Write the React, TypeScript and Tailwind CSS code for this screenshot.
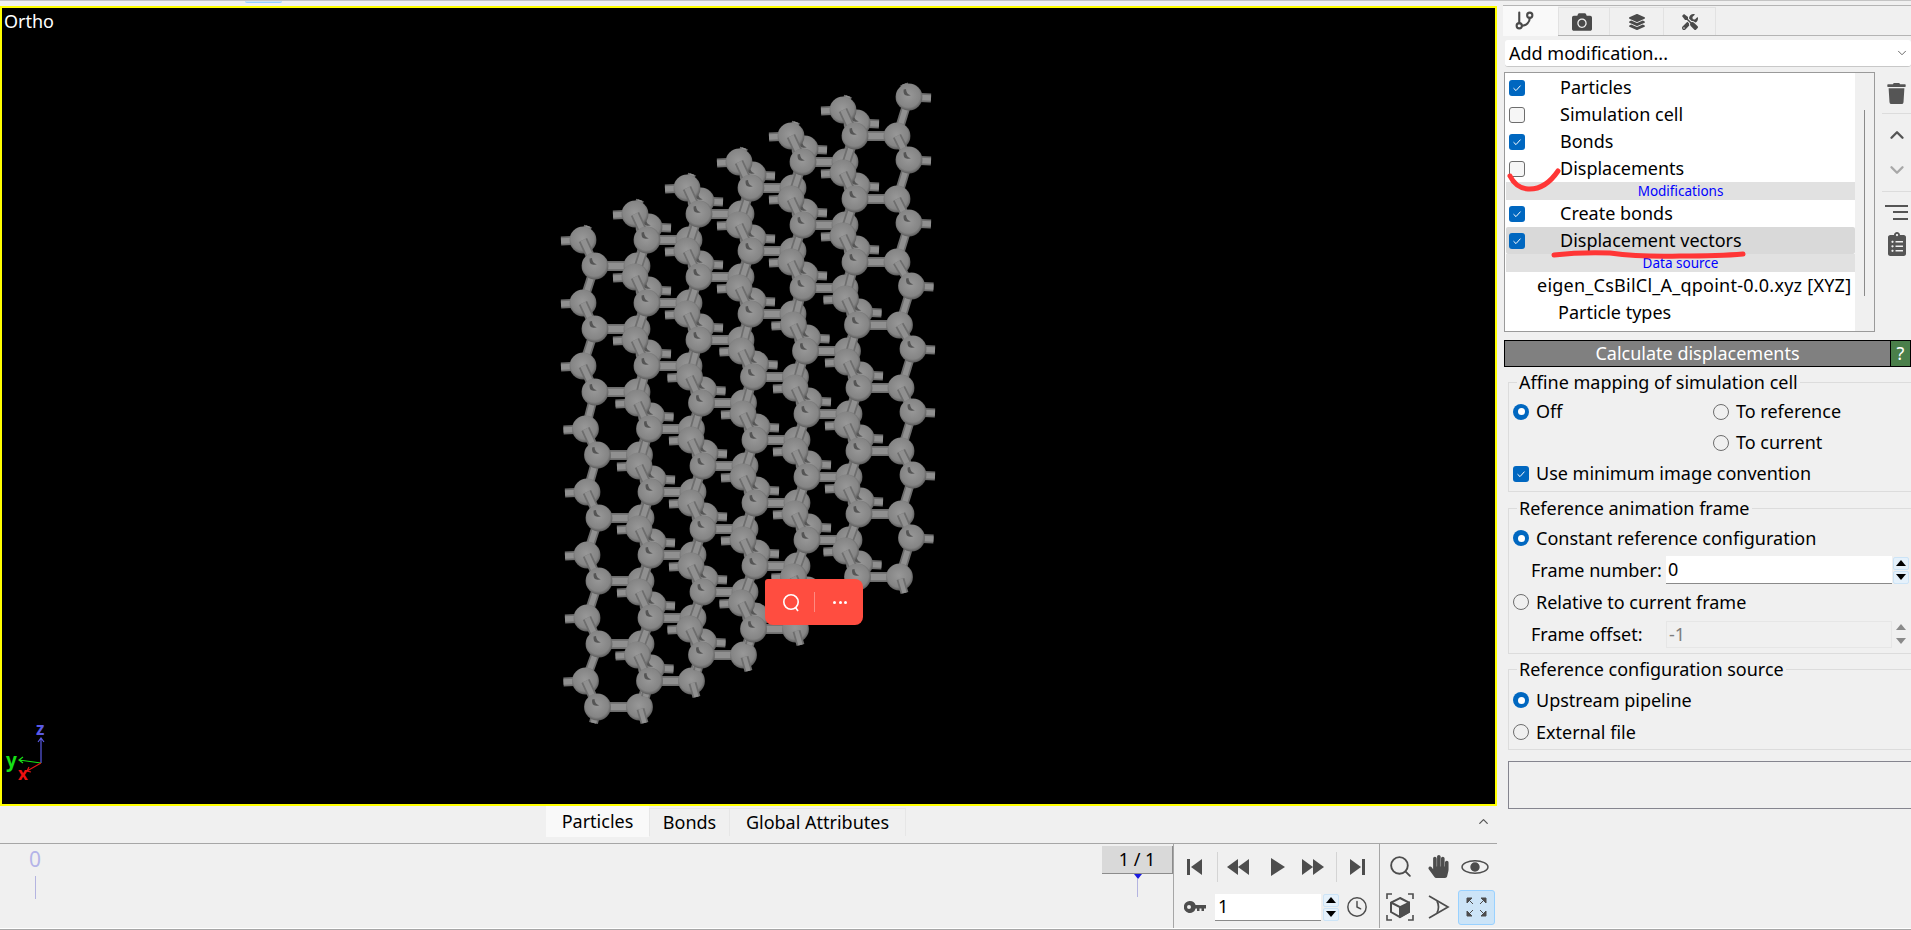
import React from 'react';
import { Search, Clock, GitBranch, ChevronDown, ChevronUp } from 'lucide-react';
import { FaCamera, FaHandPaper, FaLayerGroup, FaTools, FaTrash, FaClipboardList } from 'react-icons/fa';

const ripple = [0, 0, 0, 2.5, 4, 4, 4, 2.5];
const cols = [5, 4, 3, 2, 1, 0];
const rows = [0, 1, 2, 3, 4, 5, 6, 7];

const G = (k: number, r: number) => [843 - 52 * k + ripple[r], 110 + 26 * k + 63 * r];
const E = (k: number, r: number) => [855 - 52 * k + ripple[r], 136 + 26 * k + 63 * r];
const B = (m: number, r: number) => [897 - 52 * m + ripple[r], 136 + 26 * m + 63 * r];
const A = (m: number, r: number) => [909 - 52 * m + ripple[r], 97 + 26 * m + 63 * r];

const Bond = ({ a, b, w = 10 }: { a: number[]; b: number[]; w?: number }) => (
  <g>
    <line x1={a[0]} y1={a[1]} x2={b[0]} y2={b[1]} stroke="#6e6e6e" strokeWidth={w} />
    <line x1={a[0]} y1={a[1]} x2={b[0]} y2={b[1]} stroke="#909090" strokeWidth={w - 3.5} />
  </g>
);

const Atom = ({ p, hole }: { p: number[]; hole?: boolean }) => (
  <g transform={`translate(${p[0]} ${p[1]})`}>
    <circle r={13.4} fill="url(#atom)" />
    {hole && <path d="M -5.4 -7.5 Q -6.4 0.6 1.8 -1.8 Q -2.8 -2.6 -3 -8 Z" fill="#555555" />}
  </g>
);

const Molecule = () => (
  <svg viewBox="2 8 1493 796" className="absolute left-0 top-0 w-[1493px] h-[796px]">
    <defs>
      <radialGradient id="atom" cx="48%" cy="45%" r="55%">
        <stop offset="0%" stopColor="#989898" />
        <stop offset="78%" stopColor="#858585" />
        <stop offset="100%" stopColor="#5c5c5c" />
      </radialGradient>
    </defs>
    {cols.map((k) =>
      rows.map((r) => <Bond key={`h${k}${r}`} a={E(k, r)} b={B(k, r)} />)
    )}
    {cols.map((m) => (
      <g key={`y${m}`}>
        {rows.map((r) => {
          const a = A(m, r);
          return (
            <g key={r}>
              <Bond a={a} b={[a[0] + 22, a[1] + 1]} w={9} />
              <Bond a={a} b={B(m, r)} w={9} />
            </g>
          );
        })}
        <Bond a={A(m, 0)} b={[A(m, 0)[0] - 5, A(m, 0)[1] - 13]} w={8} />
        {rows.map((r) => <Atom key={r} p={B(m, r)} />)}
        {rows.slice(0, 7).map((r) => <Bond key={r} a={B(m, r)} b={A(m, r + 1)} w={9} />)}
        <Bond a={[B(m, 7)[0] + 1, B(m, 7)[1] + 2]} b={[B(m, 7)[0] + 5, B(m, 7)[1] + 16]} w={8} />
        {rows.map((r) => <Atom key={r} p={A(m, r)} hole />)}
      </g>
    ))}
    {cols.map((k) => (
      <g key={`x${k}`}>
        {rows.map((r) => {
          const g = G(k, r);
          const e = E(k, r);
          return (
            <g key={r}>
              <Bond a={g} b={[g[0] - 22, g[1] + 1]} w={9} />
              <Bond a={e} b={r < 7 ? G(k, r + 1) : [e[0] - 4, e[1] + 16]} w={9} />
            </g>
          );
        })}
        <Bond a={G(k, 0)} b={[G(k, 0)[0] + 5, G(k, 0)[1] - 14]} w={8} />
        {rows.map((r) => <Atom key={r} p={G(k, r)} />)}
        {rows.map((r) => <Bond key={r} a={G(k, r)} b={E(k, r)} w={9} />)}
        {rows.map((r) => <Atom key={r} p={E(k, r)} hole />)}
      </g>
    ))}
    {/* axis tripod */}
    <g strokeWidth="1.2" fill="none">
      <path d="M41 763 L41 738 M38 742 L41 738 L44 742" stroke="#5a5ae6" />
      <path d="M41 763 L19 760 M23 757 L19 760 L23 763" stroke="#16e016" />
      <path d="M41 763 L27 771 M29 767 L27 771 L31 772" stroke="#e01616" />
    </g>
  </svg>
);

const Check = ({ on }: { on?: boolean }) =>
  on ? (
    <span className="flex h-[16px] w-[16px] shrink-0 items-center justify-center rounded-[3px] bg-[#0067c0]">
      <svg width="10" height="10" viewBox="0 0 10 10" fill="none" stroke="#fff" strokeWidth="1">
        <path d="M1.5 5.2 L4 7.6 L8.5 2.6" />
      </svg>
    </span>
  ) : (
    <span className="h-[16px] w-[16px] shrink-0 rounded-[3px] border border-[#6d6d6d] bg-[#f6f6f6]" />
  );

const Radio = ({ on, label }: { on?: boolean; label: string }) => (
  <div className="flex items-center gap-[7px]">
    {on ? (
      <span className="flex h-[16px] w-[16px] shrink-0 items-center justify-center rounded-full bg-[#0067c0]">
        <span className="h-[7px] w-[7px] rounded-full bg-white" />
      </span>
    ) : (
      <span className="h-[16px] w-[16px] shrink-0 rounded-full border border-[#6d6d6d]" />
    )}
    <span>{label}</span>
  </div>
);

const ListRow = ({ on, label }: { on?: boolean; label: string }) => (
  <div className="flex h-[27px] items-center pl-[3px]">
    <Check on={on} />
    <span className="ml-[35px]">{label}</span>
  </div>
);

const SectionBar = ({ label }: { label: string }) => (
  <div className="flex h-[18px] items-center justify-center bg-[#e1e1e1] text-[13.5px] text-[#0000ff]">{label}</div>
);

const Arrow = ({ up, color = '#000' }: { up?: boolean; color?: string }) => (
  <svg width="10" height="6" viewBox="0 0 10 6" fill={color}>
    <path d={up ? 'M0 6 L5 0 L10 6 Z' : 'M0 0 L10 0 L5 6 Z'} />
  </svg>
);

const Spin = ({ active }: { active?: boolean }) => (
  <div className="flex w-[16px] shrink-0 flex-col gap-[1px]">
    {[true, false].map((up) => (
      <span
        key={String(up)}
        className={
          active
            ? 'flex h-[13px] items-center justify-center rounded-[2px] border border-[#cce4f7] bg-[#e5f1fb]'
            : 'flex h-[13px] items-center justify-center'
        }
      >
        <Arrow up={up} color={active ? '#000' : '#8a8a8a'} />
      </span>
    ))}
  </div>
);

const Group = ({ title, children, className }: { title: string; children: React.ReactNode; className: string }) => (
  <fieldset className={`ml-[5px] w-[420px] border border-[#dcdcdc] ${className}`}>
    <legend className="ml-[8px] h-[22px] px-[2px] leading-[22px]">{title}</legend>
    {children}
  </fieldset>
);

const Transport = ({ d, w }: { d: string; w: number }) => (
  <svg width={w} height="18" viewBox={`0 0 ${w} 18`} fill="#4d4d4d">
    <path d={d} />
  </svg>
);

const ViewTabs = () => (
  <div className="flex h-[30px] items-end border-b border-[#b4b4b4]">
    <div className="-mb-[1px] flex h-[31px] w-[55px] items-center justify-center bg-[#f9f9f9] pr-[12px]">
      <GitBranch size={21} strokeWidth={2.4} color="#4a4a4a" />
    </div>
    <div className="flex h-[28px] w-[52px] items-center justify-center border border-b-0 border-[#e2e2e2] pr-[4px]">
      <FaCamera size={20} color="#4a4a4a" />
    </div>
    <div className="flex h-[28px] w-[54px] items-center justify-center border border-b-0 border-l-0 border-[#e2e2e2]">
      <FaLayerGroup size={16} color="#4a4a4a" />
    </div>
    <div className="flex h-[28px] w-[52px] items-center justify-center border border-b-0 border-l-0 border-[#e2e2e2]">
      <FaTools size={16} color="#4a4a4a" />
    </div>
  </div>
);

const PipelineList = () => (
  <div className="relative mt-[5px] flex h-[260px]">
    <div className="ml-[1px] flex h-[260px] w-[372px] border border-[#9a9a9a] bg-white pl-[1px]">
      <div className="w-[349px] pt-[1px]">
        <ListRow on label="Particles" />
        <ListRow label="Simulation cell" />
        <ListRow on label="Bonds" />
        <ListRow label="Displacements" />
        <SectionBar label="Modifications" />
        <ListRow on label="Create bonds" />
        <div className="rounded-[2px] bg-[#d9d9d9]">
          <ListRow on label="Displacement vectors" />
        </div>
        <SectionBar label="Data source" />
        <div className="flex h-[27px] items-center pl-[31px] whitespace-nowrap tracking-[0.24px]">eigen_CsBilCl_A_qpoint-0.0.xyz [XYZ]</div>
        <div className="flex h-[27px] items-center pl-[52px]">Particle types</div>
      </div>
      <div className="flex w-[19px] justify-center bg-[#f0f0f0] pt-[37px]">
        <div className="h-[186px] w-[1px] bg-[#8a8a8a]" />
      </div>
    </div>
    <div className="ml-[7px] flex w-[29px] flex-col items-center">
      <div className="flex h-[41px] items-center pt-[1px]"><FaTrash size={21} color="#555" /></div>
      <div className="h-[1px] w-full bg-[#dcdcdc]" />
      <ChevronUp size={22} strokeWidth={2.6} color="#555" className="mt-[10px]" />
      <ChevronDown size={22} strokeWidth={2.6} color="#a8a8a8" className="mt-[13px]" />
      <div className="mt-[10px] h-[1px] w-full bg-[#dcdcdc]" />
      <svg width="24" height="16" viewBox="0 0 24 16" fill="#555" className="mt-[13px]">
        <rect x="0" y="0" width="23" height="2" />
        <rect x="8" y="6" width="15" height="2" />
        <rect x="8" y="13" width="15" height="2" />
      </svg>
      <FaClipboardList size={24} color="#555" className="mt-[11px]" />
    </div>
    {/* hand drawn marks on top of the list */}
    <svg className="absolute -left-[1503px] -top-[72px] h-[300px] w-[1911px]" viewBox="0 0 1911 300" fill="none" stroke="#ff3636" strokeWidth="5" strokeLinecap="round">
      <path d="M1510 176 Q1516 188 1528 189 Q1545 190 1558 171" />
      <path d="M1554 255 Q1580 252 1610 253 Q1640 257 1680 256 Q1720 256 1743 254" />
    </svg>
  </div>
);

const SidePanel = () => (
  <div className="w-[408px] shrink-0 overflow-hidden border-t border-[#b4b4b4]">
    <ViewTabs />
    <div className="mt-[4px] ml-[2px] flex h-[27px] items-center justify-between rounded-[3px] border-b border-[#c8c8c8] bg-white pl-[4px] pr-[2px]">
      <span>Add modification...</span>
      <ChevronDown size={14} strokeWidth={1.5} color="#555" />
    </div>
    <PipelineList />
    <div className="mt-[8px] ml-[1px] flex h-[27px] border border-black bg-[#808080] text-white">
      <div className="flex flex-1 items-center justify-center">Calculate displacements</div>
      <div className="flex w-[20px] items-center justify-center border-l border-black bg-[#4a7f4a]">?</div>
    </div>
    <Group title="Affine mapping of simulation cell" className="mt-[4px] h-[121px]">
      <div className="grid grid-cols-[200px_1fr] pt-[3px] pl-[4px]">
        <div className="flex h-[31px] items-center"><Radio on label="Off" /></div>
        <div className="flex h-[31px] items-center"><Radio label="To reference" /></div>
        <div className="h-[31px]" />
        <div className="flex h-[31px] items-center"><Radio label="To current" /></div>
        <div className="col-span-2 flex h-[31px] items-center gap-[7px]"><Check on /><span>Use minimum image convention</span></div>
      </div>
    </Group>
    <Group title="Reference animation frame" className="mt-[5px] h-[157px]">
      <div className="pt-[3px] pl-[4px]">
        <div className="flex h-[32px] items-center"><Radio on label="Constant reference configuration" /></div>
        <div className="flex h-[32px] items-center pl-[18px]">
          <span className="w-[135px]">Frame number:</span>
          <span className="flex h-[28px] w-[226px] items-center border-b border-[#8a8a8a] bg-white pl-[2px]">0</span>
          <span className="ml-[1px]"><Spin active /></span>
        </div>
        <div className="flex h-[32px] items-center"><Radio label="Relative to current frame" /></div>
        <div className="flex h-[32px] items-center pl-[18px]">
          <span className="w-[135px]">Frame offset:</span>
          <span className="flex h-[27px] w-[226px] items-center border border-[#e6e6e6] pl-[2px] text-[#7d7d7d]">-1</span>
          <span className="ml-[1px]"><Spin /></span>
        </div>
      </div>
    </Group>
    <Group title="Reference configuration source" className="mt-[4px] h-[92px]">
      <div className="pt-[4px] pl-[4px]">
        <div className="flex h-[32px] items-center"><Radio on label="Upstream pipeline" /></div>
        <div className="flex h-[32px] items-center"><Radio label="External file" /></div>
      </div>
    </Group>
    <div className="mt-[11px] ml-[5px] h-[48px] w-[420px] border border-[#85858f]" />
  </div>
);

const Badge = () => (
  <div className="absolute left-[763px] top-[571px] flex h-[46px] w-[98px] items-center rounded-[8px] rounded-tl-[3px] bg-[#ff4d40]">
    <svg width="18" height="19" viewBox="0 0 18 19" fill="none" stroke="#fff" strokeWidth="1.6" className="ml-[17px]">
      <circle cx="9" cy="9" r="7.2" />
      <path d="M13.5 14.5 L16 18" />
    </svg>
    <div className="ml-[14px] h-[20px] w-[1px] bg-[#ff8a80]" />
    <div className="ml-[18px] flex gap-[2.5px]">
      <span className="h-[3px] w-[3px] rounded-full bg-white" />
      <span className="h-[3px] w-[3px] rounded-full bg-white" />
      <span className="h-[3px] w-[3px] rounded-full bg-white" />
    </div>
  </div>
);

const Viewport = () => (
  <div className="relative h-[800px] overflow-hidden border-2 border-[#ffff00] bg-black">
    <Molecule />
    <span className="absolute left-[2px] top-[1px] text-[18px] leading-[24px] text-white">Ortho</span>
    <span className="absolute left-[34px] top-[712px] text-[17px] font-bold leading-[18px] text-[#5a5ae6]">z</span>
    <span className="absolute left-[4px] top-[742px] text-[19px] font-bold leading-[20px] text-[#16e016]">y</span>
    <span className="absolute left-[16px] top-[757px] text-[17px] font-bold leading-[18px] text-[#ee1111]">x</span>
    <Badge />
  </div>
);

const DataTabs = () => (
  <div className="flex h-[38px] items-start border-b border-[#a6a6a6] pl-[546px]">
    <div className="flex h-[31px] w-[103px] items-center justify-center bg-[#f9f9f9]">Particles</div>
    <div className="mt-[2px] flex h-[28px] w-[81px] items-center justify-center border border-[#e6e6e6] border-b-0">Bonds</div>
    <div className="mt-[2px] flex h-[28px] w-[176px] items-center justify-center border border-[#e6e6e6] border-b-0 border-l-0">Global Attributes</div>
    <ChevronUp size={15} strokeWidth={2} color="#555" className="ml-[570px] mt-[8px]" />
  </div>
);

const Timeline = () => (
  <div className="flex h-[85px]">
    <div className="flex w-[1174px] justify-between border-r border-[#a6a6a6] pl-[27px]">
      <div className="flex w-[16px] flex-col items-center pt-[3px]">
        <span className="text-[21px] leading-[24px] text-[#b4b4e8]">0</span>
        <div className="mt-[5px] h-[23px] w-[1px] bg-[#b4b4e0]" />
      </div>
      <div className="flex w-[71px] flex-col items-center pt-[2px]">
        <div className="flex h-[28px] w-[71px] items-center justify-center border-b border-r border-[#8c8c8c] bg-[#d9d9d9]">1 / 1</div>
        <svg width="8" height="5" viewBox="0 0 8 5" fill="#1a1ae0"><path d="M0 0 L8 0 L4 5 Z" /></svg>
        <div className="h-[18px] w-[1px] bg-[#b4b4e0]" />
      </div>
    </div>
    <div className="w-[206px] border-r border-[#a6a6a6]">
      <div className="flex h-[42px] items-center pt-[3px]">
        <span className="ml-[13px]"><Transport w={16} d="M0 1 H3 V17 H0 Z M15 1 V17 L4 9 Z" /></span>
        <div className="ml-[14px] h-[30px] w-[1px] bg-[#d4d4d4]" />
        <span className="ml-[9px]"><Transport w={22} d="M11 1 V17 L0 9 Z M22 1 V17 L11 9 Z" /></span>
        <span className="ml-[22px]"><Transport w={14} d="M0 0 L14 9 L0 18 Z" /></span>
        <span className="ml-[17px]"><Transport w={22} d="M0 1 L11 9 L0 17 Z M11 1 L22 9 L11 17 Z" /></span>
        <div className="ml-[12px] h-[30px] w-[1px] bg-[#d4d4d4]" />
        <span className="ml-[12px]"><Transport w={16} d="M1 1 L12 9 L1 17 Z M13 1 H16 V17 H13 Z" /></span>
      </div>
      <div className="flex h-[42px] items-center">
        <svg width="22" height="12" viewBox="0 0 22 12" fill="#4d4d4d" className="ml-[10px]">
          <path fillRule="evenodd" d="M6 0 A6 6 0 0 1 11.6 4 H22 V7.5 H20 V10 H17.5 V7.5 H15.5 V10 H13 V7.5 H11.6 A6 6 0 1 1 6 0 Z M5 4 A2 2 0 1 0 5 8 A2 2 0 1 0 5 4 Z" />
        </svg>
        <span className="ml-[9px] flex h-[27px] w-[106px] items-center border-b border-[#8a8a8a] bg-white pl-[3px]">1</span>
        <span className="ml-[2px]"><Spin active /></span>
        <Clock size={22} strokeWidth={1.6} color="#4d4d4d" className="ml-[7px]" />
      </div>
    </div>
    <div className="w-[117px]">
      <div className="flex h-[42px] items-center pt-[3px]">
        <Search size={25} strokeWidth={1.8} color="#4d4d4d" className="ml-[8px]" />
        <FaHandPaper size={23} color="#4d4d4d" className="ml-[14px]" />
        <svg width="28" height="16" viewBox="0 0 28 16" fill="none" stroke="#4d4d4d" strokeWidth="1.4" className="ml-[11px]">
          <ellipse cx="14" cy="8" rx="13" ry="6.2" />
          <circle cx="14" cy="8" r="4" fill="#4d4d4d" />
        </svg>
      </div>
      <div className="flex h-[42px] items-center">
        <svg width="28" height="28" viewBox="0 0 28 28" fill="none" stroke="#4d4d4d" strokeWidth="1.6" className="ml-[6px]">
          <path d="M1 6 V1 H6 M22 1 H27 V6 M27 22 V27 H22 M6 27 H1 V22" />
          <path d="M14 5 L23 9.5 V19 L14 24 L5 19 V9.5 Z" strokeWidth="2" />
          <path d="M14 14 L23 9.5 V19 L14 24 Z" fill="#4d4d4d" />
          <path d="M5 9.5 L14 14 V24" strokeWidth="2" />
        </svg>
        <svg width="22" height="24" viewBox="0 0 22 24" fill="none" stroke="#4d4d4d" strokeWidth="1.7" className="ml-[14px]">
          <path d="M1 1 L20 12 L1 23" />
          <path d="M9 6 Q12 12 9 18" />
        </svg>
        <div className="ml-[8px] flex h-[35px] w-[37px] items-center justify-center rounded-[3px] border border-[#99d1ff] bg-[#cce4f7]">
          <svg width="21" height="20" viewBox="0 0 21 20" fill="#4d4d4d" stroke="#4d4d4d">
            <path d="M1 1 H6 L1 6 Z M1 1 L7 7" />
            <path d="M20 1 H15 L20 6 Z M20 1 L14 7" />
            <path d="M1 19 H6 L1 14 Z M1 19 L7 13" />
            <path d="M20 19 H15 L20 14 Z M20 19 L14 13" />
          </svg>
        </div>
      </div>
    </div>
  </div>
);

const App: React.FC = () => {
  return (
    <div className="flex h-[930px] w-[1911px] flex-col overflow-hidden bg-[#f0f0f0] font-['Noto_Sans','Liberation_Sans',sans-serif] text-[18px] text-black">
      <div className="relative h-[5px] shrink-0 border-t border-[#c4c4c4] pl-[245px]">
        <div className="h-[2px] w-[37px] rounded-b-[2px] border-b border-[#99d1ff] bg-[#cce4f7]" />
      </div>
      <div className="flex h-[923px] shrink-0">
        <div className="mr-[6px] w-[1497px] shrink-0 pt-[1px]">
          <Viewport />
          <DataTabs />
          <Timeline />
        </div>
        <SidePanel />
      </div>
      <div className="h-[2px] shrink-0 border-t border-white bg-[#a6a6a6]" />
    </div>
  );
};

export default App;
